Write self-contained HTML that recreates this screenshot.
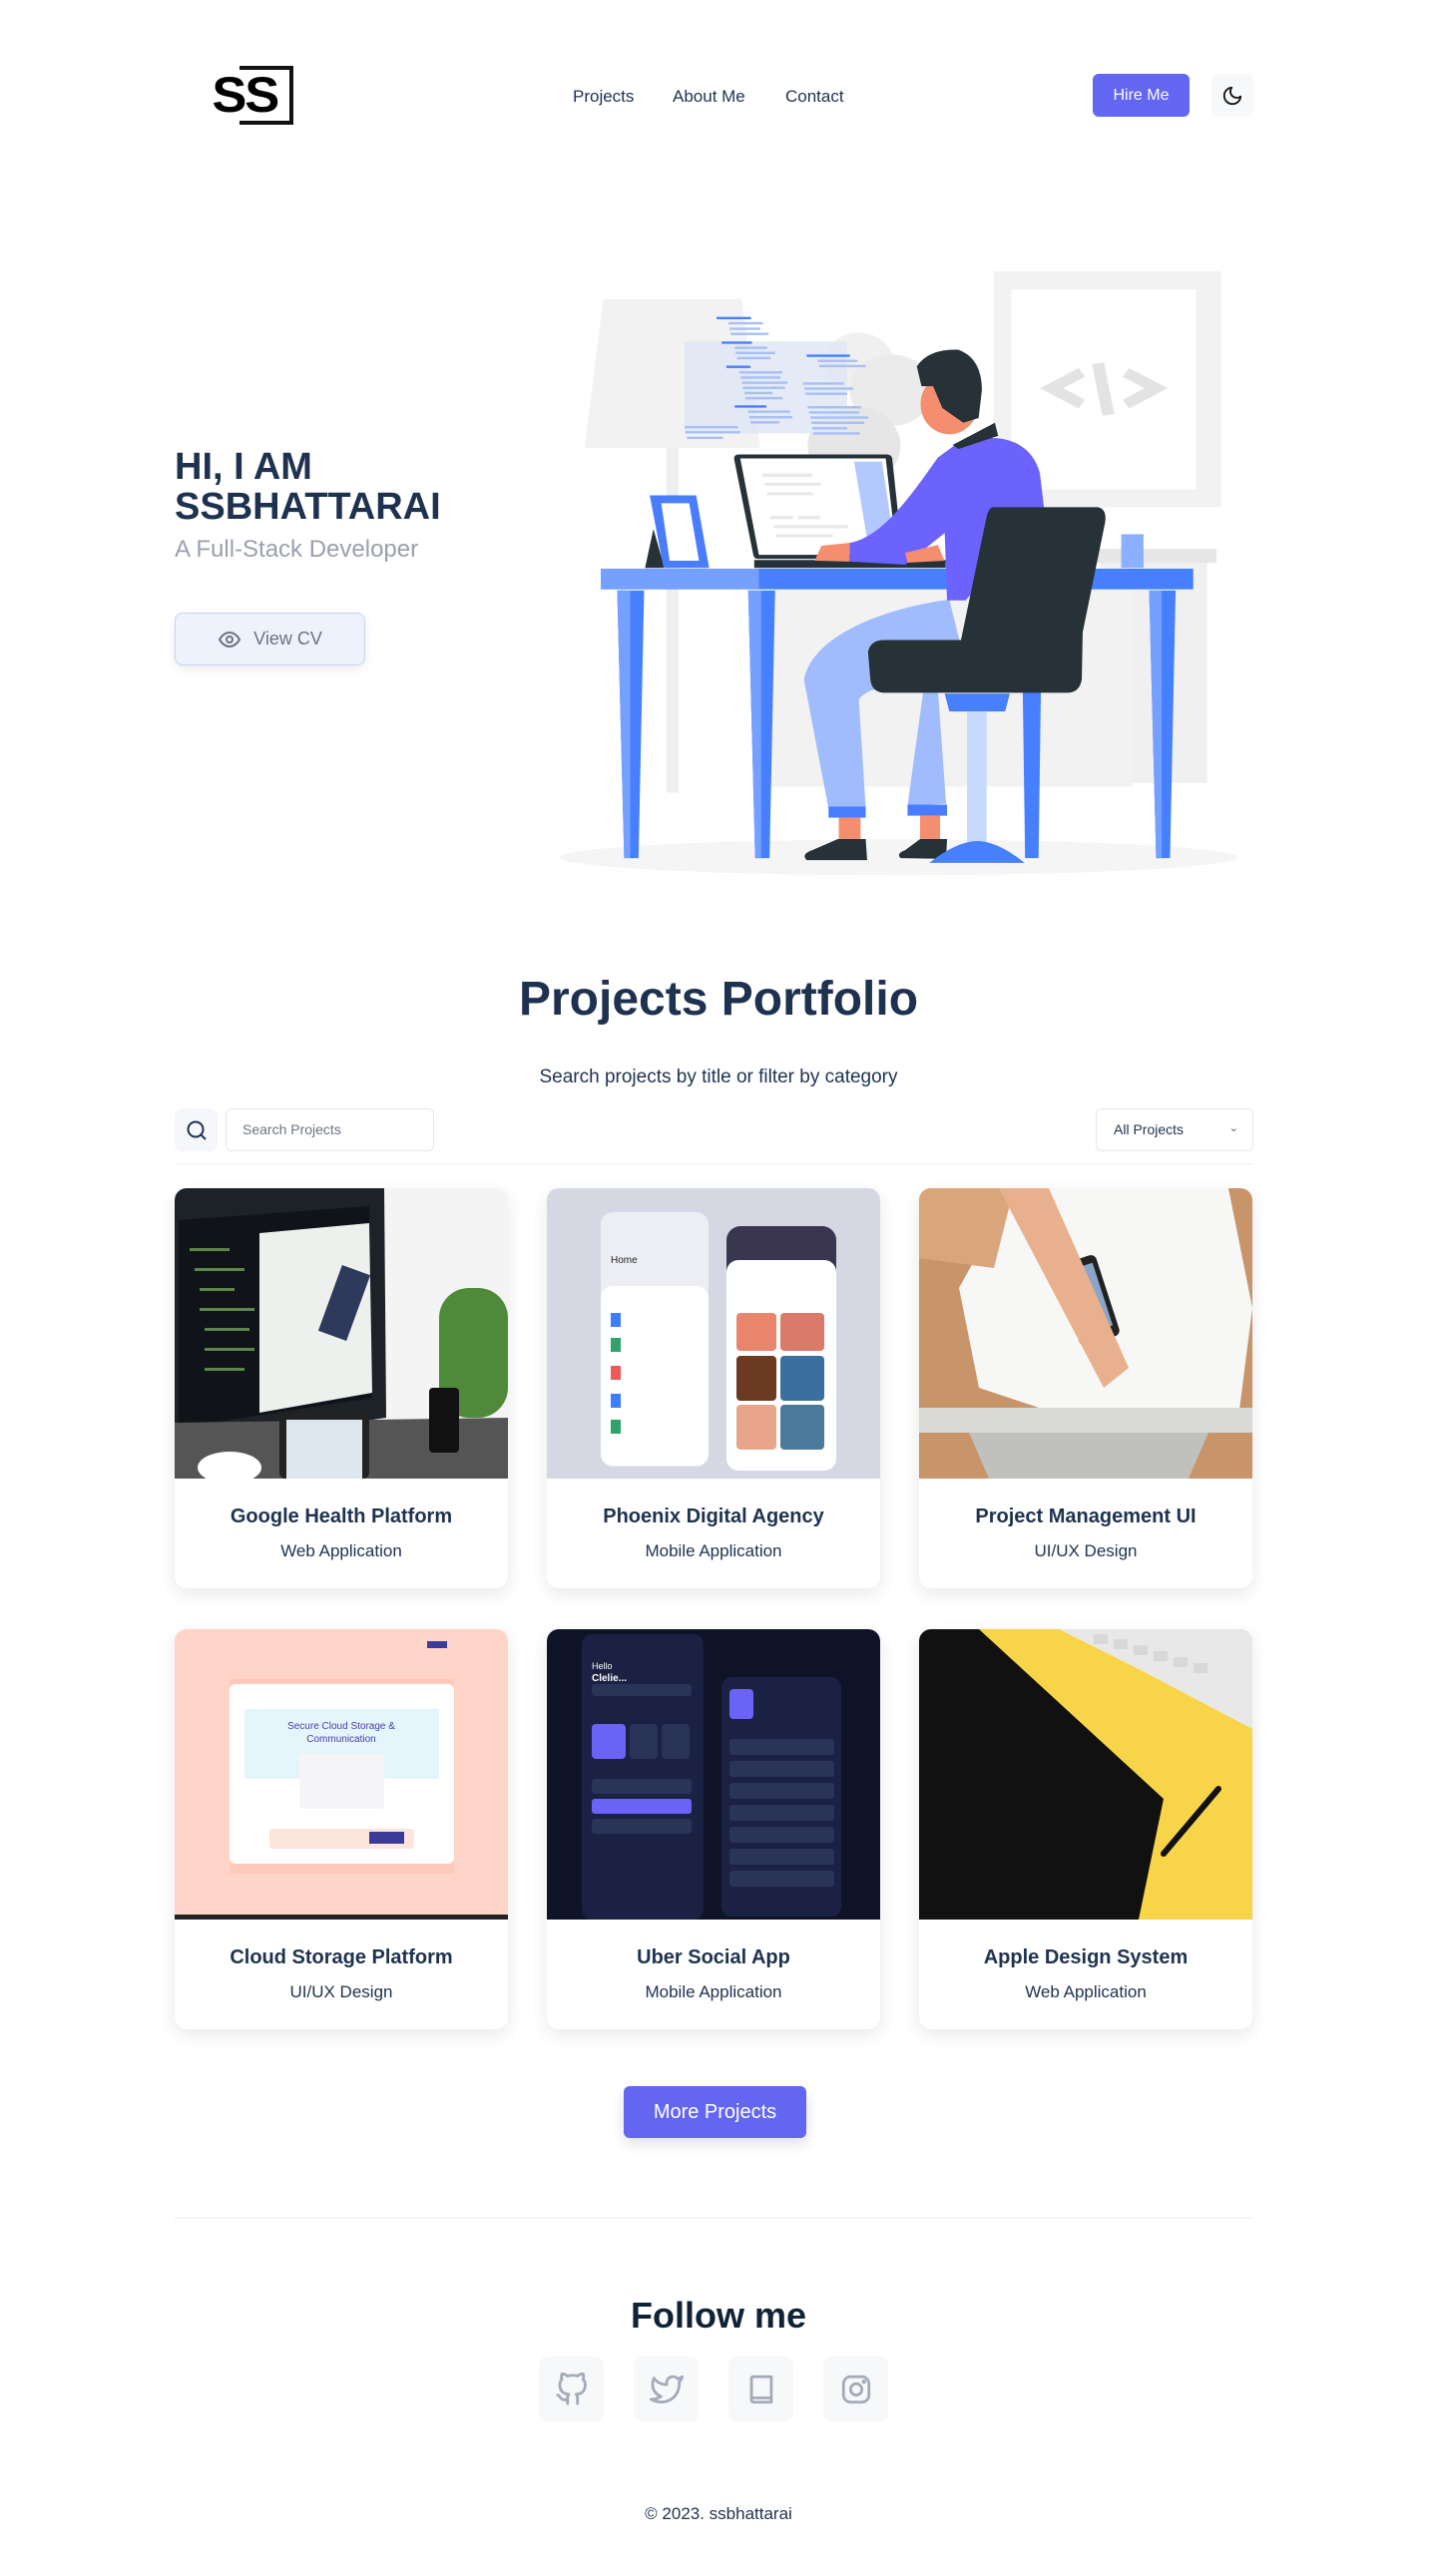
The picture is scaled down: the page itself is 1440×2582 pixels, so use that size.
<!DOCTYPE html>
<html><head><meta charset="utf-8">
<style>
*{margin:0;padding:0;box-sizing:border-box}
body{width:1440px;height:2582px;background:#fff;font-family:"Liberation Sans",sans-serif;color:#1e3250;position:relative;overflow:hidden}
.a{position:absolute}
.nav{font-size:17px;color:#1e3250}
.card{position:absolute;width:334px;height:401px;border-radius:12px;background:#fff;box-shadow:0 6px 18px rgba(0,0,0,.09);overflow:hidden}
.card svg{display:block}
.card h3{font-size:20px;font-weight:bold;text-align:center;margin-top:27px;color:#1e3250}
.card p{font-size:17px;text-align:center;margin-top:13px;color:#1e3250}
.soc{position:absolute;top:2362px;width:65px;height:65px;border-radius:8px;background:#f7f8fa;display:flex;align-items:center;justify-content:center}
</style></head><body>

<div class="a" style="left:240px;top:66px;width:54px;height:59px;border:4px solid #111;border-left:none"></div>
<div class="a" style="left:214px;top:70px;font-size:50px;font-weight:bold;color:#000;letter-spacing:-2px;line-height:50px;background:#fff;padding-right:2px;transform:scaleX(1.05)">SS</div>
<div class="a nav" style="left:574px;top:87px">Projects</div>
<div class="a nav" style="left:674px;top:87px">About Me</div>
<div class="a nav" style="left:787px;top:87px">Contact</div>
<div class="a" style="left:1095px;top:74px;width:97px;height:43px;border-radius:6px;background:#6366f1;color:#fff;font-size:16px;text-align:center;line-height:43px">Hire Me</div>
<div class="a" style="left:1214px;top:74px;width:42px;height:43px;border-radius:6px;background:#f7f8fa;display:flex;align-items:center;justify-content:center">
<svg width="22" height="22" viewBox="0 0 24 24" fill="none" stroke="#111" stroke-width="2" stroke-linecap="round" stroke-linejoin="round"><path d="M21 12.8A9 9 0 1 1 11.2 3a7 7 0 0 0 9.8 9.8z"/></svg></div>

<div class="a" style="left:175px;top:448px;font-size:38px;font-weight:bold;line-height:40px;color:#1e3250">HI, I AM<br>SSBHATTARAI</div>
<div class="a" style="left:175px;top:537px;font-size:24px;color:#9aa0ad">A Full-Stack Developer</div>
<div class="a" style="left:175px;top:614px;width:191px;height:53px;border-radius:8px;background:#eef2fd;border:1px solid #c7d3f8;box-shadow:0 4px 10px rgba(0,0,0,.08);display:flex;align-items:center;justify-content:center;font-size:18px;color:#6b7280">
<svg width="24" height="24" viewBox="0 0 24 24" fill="none" stroke="#6b7280" stroke-width="2"><path d="M2 12s3.6-7 10-7 10 7 10 7-3.6 7-10 7S2 12 2 12z"/><circle cx="12" cy="12" r="3"/></svg><span style="margin-left:12px">View CV</span></div>

<svg class="a" style="left:530px;top:260px" width="730" height="620" viewBox="0 0 1568 1560" preserveAspectRatio="none">
<ellipse cx="795" cy="1508" rx="730" ry="45" fill="#f5f5f5"/>
<polygon points="160,100 458,100 498,475 120,475" fill="#f2f2f2"/>
<rect x="296" y="475" width="26" height="870" fill="#efefef"/>
<rect x="1000" y="30" width="490" height="595" fill="#f2f2f2"/>
<rect x="1038" y="76" width="398" height="504" fill="#fff"/>
<g stroke="#e3e3e3" stroke-width="26" fill="none"><polyline points="1190,285 1125,325 1190,365"/><line x1="1225" y1="262" x2="1247" y2="392"/><polyline points="1285,285 1350,325 1285,365"/></g>
<rect x="1220" y="730" width="260" height="35" fill="#e6e6e6"/>
<rect x="1230" y="765" width="230" height="555" fill="#f0f0f0"/>
<rect x="520" y="830" width="780" height="500" fill="#f2f2f2"/>
<circle cx="710" cy="260" r="75" fill="#f0f0f0"/><circle cx="780" cy="330" r="90" fill="#ebebeb"/><circle cx="700" cy="470" r="100" fill="#e6e6e6"/>
<rect x="335" y="207" width="350" height="232" fill="#dfe6f5" opacity=".85"/>
<g fill="#4680ff"><rect x="404" y="145" width="74" height="6"/><rect x="415" y="207" width="65" height="6"/><rect x="425" y="268" width="52" height="6"/><rect x="443" y="368" width="68" height="6"/><rect x="598" y="240" width="93" height="6"/><rect x="475" y="518" width="62" height="7"/><rect x="493" y="625" width="40" height="7"/></g>
<g fill="#a8c0f5"><rect x="430" y="158" width="74" height="6"/><rect x="432" y="172" width="66" height="6"/><rect x="434" y="185" width="82" height="6"/><rect x="443" y="220" width="70" height="6"/><rect x="445" y="233" width="85" height="6"/><rect x="448" y="246" width="72" height="6"/><rect x="453" y="282" width="92" height="6"/><rect x="456" y="295" width="86" height="6"/><rect x="459" y="308" width="98" height="6"/><rect x="461" y="321" width="90" height="6"/><rect x="464" y="334" width="60" height="6"/><rect x="466" y="347" width="80" height="6"/><rect x="472" y="381" width="90" height="6"/><rect x="475" y="395" width="92" height="6"/><rect x="477" y="408" width="62" height="6"/><rect x="335" y="420" width="115" height="6"/><rect x="337" y="433" width="118" height="6"/><rect x="340" y="447" width="78" height="6"/><rect x="622" y="253" width="85" height="6"/><rect x="625" y="266" width="100" height="6"/><rect x="590" y="310" width="88" height="6"/><rect x="593" y="323" width="105" height="6"/><rect x="595" y="336" width="90" height="6"/><rect x="600" y="370" width="115" height="6"/><rect x="603" y="383" width="108" height="6"/><rect x="606" y="396" width="124" height="6"/><rect x="608" y="409" width="114" height="6"/><rect x="610" y="423" width="75" height="6"/><rect x="612" y="436" width="100" height="6"/></g>
<path d="M452,492 L770,492 Q780,492 782,502 L805,755 L492,755 Q485,755 483,745 L442,505 Q440,492 452,492Z" fill="#263238"/>
<polygon points="455,502 768,502 792,745 495,745" fill="#fff"/>
<polygon points="700,510 760,510 785,705 728,705" fill="#b3c8fc"/>
<g fill="#e8e8e8"><rect x="503" y="540" width="106" height="8"/><rect x="508" y="563" width="120" height="8"/><rect x="513" y="587" width="98" height="8"/><rect x="520" y="647" width="48" height="8"/><rect x="580" y="647" width="46" height="8"/><rect x="527" y="670" width="160" height="8"/><rect x="532" y="693" width="122" height="8"/></g>
<rect x="485" y="758" width="412" height="20" fill="#263238"/>
<polygon points="250,778 268,680 292,778" fill="#263238"/>
<polygon points="260,595 360,595 388,778 290,778" fill="#4a7dfd"/>
<polygon points="285,615 345,615 366,760 303,760" fill="#fff"/>
<rect x="1275" y="693" width="48" height="85" fill="#8ab0ff"/>
<rect x="155" y="780" width="1275" height="52" fill="#4680ff"/>
<rect x="155" y="780" width="340" height="52" fill="#75a0ff"/>
<g fill="#4680ff"><polygon points="190,835 248,835 236,1510 205,1510"/><polygon points="472,835 530,835 518,1510 487,1510"/><polygon points="1060,835 1105,835 1097,1510 1068,1510"/><polygon points="1335,835 1392,835 1380,1510 1350,1510"/></g>
<g fill="#75a0ff"><polygon points="190,835 218,835 218,1510 205,1510"/><polygon points="472,835 500,835 500,1510 487,1510"/><polygon points="1335,835 1362,835 1362,1510 1350,1510"/></g>
<path d="M905,858 C760,880 610,950 592,1060 L645,1385 L725,1382 L710,1110 C730,1075 800,1070 850,1080 L815,1378 L898,1373 L880,1080 L935,1000 Z" fill="#a0bcfc"/>
<rect x="645" y="1380" width="80" height="28" fill="#4a7dfd"/><rect x="815" y="1375" width="85" height="28" fill="#4a7dfd"/>
<rect x="667" y="1408" width="47" height="58" fill="#f58e6f"/><rect x="842" y="1403" width="43" height="60" fill="#f58e6f"/>
<path d="M665,1462 L725,1462 L728,1515 L598,1515 Q585,1500 610,1490Z" fill="#263238"/>
<path d="M842,1462 L900,1462 L898,1512 L800,1510 Q790,1498 810,1490Z" fill="#263238"/>
<path d="M915,470 C1000,430 1080,450 1100,540 L1110,640 L940,860 L900,860 L895,690 L810,770 L690,762 L690,715 C760,700 820,600 880,500 Z" fill="#6c63ff"/>
<path d="M615,760 L630,722 L690,715 L690,762Z" fill="#f58e6f"/>
<path d="M810,740 L880,720 L895,760 L815,765Z" fill="#f58e6f"/>
<path d="M912,468 L1003,412 L1010,445 L925,478Z" fill="#263238"/>
<ellipse cx="905" cy="365" rx="62" ry="76" fill="#f58e6f"/>
<path d="M835,270 Q860,225 925,228 Q975,250 975,330 L968,400 L935,412 L890,375 L870,320 L845,320 Z" fill="#263238"/>
<path d="M1000,625 L1225,625 Q1245,630 1240,665 L1192,940 L1190,1060 Q1185,1092 1160,1093 L762,1093 Q738,1090 735,1060 L730,990 Q735,960 765,960 L930,960 L985,650 Q990,625 1000,625Z" fill="#263238"/>
<polygon points="895,1095 1035,1095 1025,1140 905,1140" fill="#4680ff"/>
<rect x="943" y="1140" width="42" height="330" fill="#c7d8ff"/>
<path d="M862,1522 Q920,1468 965,1467 Q1010,1468 1067,1522Z" fill="#4680ff"/>
</svg>

<div class="a" style="left:0;width:1440px;top:974px;text-align:center;font-size:48px;font-weight:bold;color:#1e3250">Projects Portfolio</div>
<div class="a" style="left:0;width:1440px;top:1069px;text-align:center;font-size:19px;color:#1e3250">Search projects by title or filter by category</div>
<div class="a" style="left:175px;top:1111px;width:43px;height:43px;border-radius:8px;background:#f5f7fb;display:flex;align-items:center;justify-content:center"><svg width="24" height="24" viewBox="0 0 24 24" fill="none" stroke="#1e3250" stroke-width="2"><circle cx="11" cy="11" r="7.5"/><path d="M16.5 16.5L21 21"/></svg></div>
<div class="a" style="left:226px;top:1111px;width:209px;height:43px;border-radius:6px;border:1px solid #e4e6eb;font-size:14px;color:#6b7280;line-height:41px;padding-left:16px">Search Projects</div>
<div class="a" style="left:1098px;top:1111px;width:158px;height:43px;border-radius:6px;border:1px solid #e4e6eb;font-size:14px;color:#1e3250;line-height:41px;padding-left:17px">All Projects<span style="position:absolute;right:14px;top:-1px;font-size:11px;color:#555">&#8964;</span></div>
<div class="a" style="left:175px;top:1166px;width:1081px;height:1px;background:#f0f1f4"></div>

<div class="card" style="left:175px;top:1191px">
<svg width="334" height="291" viewBox="0 0 334 291"><rect width="334" height="291" fill="#f4f4f4"/><rect x="265" y="100" width="69" height="130" fill="#4e8a3a" rx="30"/><polygon points="0,0 210,0 212,230 0,260" fill="#1d2228"/><polygon points="4,32 195,18 198,210 4,240" fill="#101418"/><g fill="#6fa35a" opacity=".8"><rect x="15" y="60" width="40" height="3"/><rect x="20" y="80" width="50" height="3"/><rect x="25" y="100" width="35" height="3"/><rect x="25" y="120" width="55" height="3"/><rect x="30" y="140" width="45" height="3"/><rect x="30" y="160" width="50" height="3"/><rect x="30" y="180" width="40" height="3"/></g><polygon points="85,45 195,35 198,205 85,225" fill="#eef0ee"/><rect x="155" y="80" width="30" height="70" fill="#2e3a5c" transform="rotate(20 170 115)"/><polygon points="0,235 334,230 334,291 0,291" fill="#555"/><rect x="105" y="225" width="90" height="66" rx="6" fill="#222"/><rect x="112" y="232" width="76" height="59" fill="#dde6ee"/><rect x="255" y="200" width="30" height="65" rx="4" fill="#111"/><ellipse cx="55" cy="280" rx="32" ry="16" fill="#fff"/></svg>
<h3>Google Health Platform</h3><p>Web Application</p></div>

<div class="card" style="left:548px;top:1191px">
<svg width="334" height="291" viewBox="0 0 334 291"><rect width="334" height="291" fill="#d5d7e2"/><rect x="54" y="24" width="108" height="255" rx="12" fill="#eceef4"/><rect x="54" y="98" width="108" height="180" rx="12" fill="#fff"/><text x="64" y="75" font-size="10" font-family="Liberation Sans" fill="#222">Home</text><g fill="#3d7eff"><rect x="64" y="125" width="10" height="14"/><rect x="64" y="206" width="10" height="14"/></g><g fill="#2fa36b"><rect x="64" y="150" width="10" height="14"/><rect x="64" y="232" width="10" height="14"/></g><rect x="64" y="178" width="10" height="14" fill="#ee5a5a"/><rect x="180" y="38" width="110" height="245" rx="14" fill="#3a3650"/><rect x="180" y="72" width="110" height="211" rx="12" fill="#fff"/><rect x="190" y="125" width="40" height="38" rx="4" fill="#e9856c"/><rect x="234" y="125" width="44" height="38" rx="4" fill="#d97a6a"/><rect x="190" y="168" width="40" height="45" rx="4" fill="#6b3a20"/><rect x="234" y="168" width="44" height="45" rx="4" fill="#3a6fa0"/><rect x="190" y="217" width="40" height="45" rx="4" fill="#e8a58c"/><rect x="234" y="217" width="44" height="45" rx="4" fill="#4b7a9a"/></svg>
<h3>Phoenix Digital Agency</h3><p>Mobile Application</p></div>

<div class="card" style="left:921px;top:1191px">
<svg width="334" height="291" viewBox="0 0 334 291"><rect width="334" height="291" fill="#c8946a"/><polygon points="95,0 310,0 334,120 320,230 180,240 60,200 40,100" fill="#f7f7f5"/><polygon points="0,0 95,0 75,80 0,70" fill="#d9a57a"/><rect x="148" y="70" width="42" height="85" rx="6" fill="#222" transform="rotate(-18 169 112)"/><rect x="153" y="78" width="32" height="66" fill="#8aa5c9" transform="rotate(-18 169 112)"/><polygon points="80,0 130,0 210,180 185,200" fill="#e8b08c"/><rect x="0" y="220" width="334" height="25" fill="#d9d9d6"/><polygon points="50,245 290,245 270,291 70,291" fill="#c0c0bc"/></svg>
<h3>Project Management UI</h3><p>UI/UX Design</p></div>

<div class="card" style="left:175px;top:1633px">
<svg width="334" height="291" viewBox="0 0 334 291"><rect width="334" height="291" fill="#ffd4c9"/><rect x="55" y="50" width="225" height="195" fill="#ffc2b2" opacity=".6"/><rect x="55" y="55" width="225" height="180" rx="6" fill="#fff"/><rect x="70" y="80" width="195" height="70" fill="#e4f6fb"/><text x="167" y="100" font-size="10" text-anchor="middle" font-family="Liberation Sans" fill="#4a3aa8">Secure Cloud Storage &amp;</text><text x="167" y="113" font-size="10" text-anchor="middle" font-family="Liberation Sans" fill="#4a3aa8">Communication</text><rect x="125" y="125" width="85" height="55" rx="3" fill="#f5f5f8"/><rect x="95" y="200" width="145" height="20" rx="3" fill="#fde5de"/><rect x="195" y="203" width="35" height="12" fill="#3b3b9a"/><rect x="253" y="12" width="20" height="7" fill="#3b3b9a"/><rect x="0" y="286" width="334" height="5" fill="#222"/></svg>
<h3>Cloud Storage Platform</h3><p>UI/UX Design</p></div>

<div class="card" style="left:548px;top:1633px">
<svg width="334" height="291" viewBox="0 0 334 291"><rect width="334" height="291" fill="#0e1328"/><rect x="35" y="5" width="122" height="286" rx="10" fill="#1a2142"/><rect x="175" y="48" width="120" height="240" rx="10" fill="#1a2142"/><rect x="45" y="55" width="100" height="12" rx="3" fill="#2a3358"/><rect x="45" y="95" width="34" height="35" rx="4" fill="#6a63f5"/><rect x="83" y="95" width="28" height="35" rx="4" fill="#2a3358"/><rect x="115" y="95" width="28" height="35" rx="4" fill="#2a3358"/><g fill="#2a3358"><rect x="45" y="150" width="100" height="15" rx="3"/><rect x="45" y="190" width="100" height="15" rx="3"/></g><rect x="45" y="170" width="100" height="15" rx="3" fill="#6a63f5"/><rect x="183" y="60" width="24" height="30" rx="4" fill="#6a63f5"/><g fill="#2a3358"><rect x="183" y="110" width="105" height="16" rx="3"/><rect x="183" y="132" width="105" height="16" rx="3"/><rect x="183" y="154" width="105" height="16" rx="3"/><rect x="183" y="176" width="105" height="16" rx="3"/><rect x="183" y="198" width="105" height="16" rx="3"/><rect x="183" y="220" width="105" height="16" rx="3"/><rect x="183" y="242" width="105" height="16" rx="3"/></g><text x="45" y="40" font-size="9" font-family="Liberation Sans" fill="#fff">Hello</text><text x="45" y="52" font-size="10" font-weight="bold" font-family="Liberation Sans" fill="#fff">Clelie...</text></svg>
<h3>Uber Social App</h3><p>Mobile Application</p></div>

<div class="card" style="left:921px;top:1633px">
<svg width="334" height="291" viewBox="0 0 334 291"><rect width="334" height="291" fill="#f8d548"/><polygon points="0,0 60,0 245,170 220,291 0,291" fill="#111"/><polygon points="140,0 334,0 334,100 220,40" fill="#e8e8e8"/><g fill="#d8d8d8"><rect x="175" y="5" width="14" height="10"/><rect x="195" y="10" width="14" height="10"/><rect x="215" y="16" width="14" height="10"/><rect x="235" y="22" width="14" height="10"/><rect x="255" y="28" width="14" height="10"/><rect x="275" y="34" width="14" height="10"/></g><line x1="300" y1="160" x2="245" y2="225" stroke="#111" stroke-width="6" stroke-linecap="round"/></svg>
<h3>Apple Design System</h3><p>Web Application</p></div>

<div class="a" style="left:625px;top:2091px;width:183px;height:52px;border-radius:6px;background:#6366f1;color:#fff;font-size:20px;text-align:center;line-height:52px;box-shadow:0 6px 14px rgba(0,0,0,.12)">More Projects</div>
<div class="a" style="left:175px;top:2222px;width:1081px;height:2px;background:#f4f5f8"></div>
<div class="a" style="left:0;width:1440px;top:2300px;text-align:center;font-size:36px;font-weight:bold;color:#0f2236">Follow me</div>

<div class="soc" style="left:540px"><svg width="34" height="34" viewBox="0 0 24 24" fill="none" stroke="#a4abb8" stroke-width="2" stroke-linecap="round" stroke-linejoin="round"><path d="M9 19c-5 1.5-5-2.5-7-3m14 6v-3.9a3.4 3.4 0 0 0-.9-2.6c3.1-.3 6.4-1.5 6.4-7A5.4 5.4 0 0 0 20 4.8 5 5 0 0 0 19.9 1S18.7.7 16 2.5a13.4 13.4 0 0 0-7 0C6.3.7 5.1 1 5.1 1A5 5 0 0 0 5 4.8a5.4 5.4 0 0 0-1.5 3.7c0 5.4 3.3 6.6 6.4 7A3.4 3.4 0 0 0 9 18.1V22"/></svg></div>
<div class="soc" style="left:635px"><svg width="34" height="34" viewBox="0 0 24 24" fill="none" stroke="#a4abb8" stroke-width="2" stroke-linecap="round" stroke-linejoin="round"><path d="M23 3a10.9 10.9 0 0 1-3.1 1.5 4.5 4.5 0 0 0-7.9 3v1A10.7 10.7 0 0 1 3 4s-4 9 5 13a11.6 11.6 0 0 1-7 2c9 5 20 0 20-11.5a4.5 4.5 0 0 0-.1-.8A7.7 7.7 0 0 0 23 3z"/></svg></div>
<div class="soc" style="left:730px"><svg width="34" height="34" viewBox="0 0 24 24" fill="none" stroke="#a4abb8" stroke-width="2" stroke-linecap="round" stroke-linejoin="round"><path d="M5 20V4a1 1 0 0 1 1-1h13v15H6.5A1.5 1.5 0 0 0 5 19.5 1.5 1.5 0 0 0 6.5 21H19v-3"/></svg></div>
<div class="soc" style="left:825px"><svg width="34" height="34" viewBox="0 0 24 24" fill="none" stroke="#a4abb8" stroke-width="2" stroke-linecap="round" stroke-linejoin="round"><rect x="3" y="3" width="18" height="18" rx="5"/><circle cx="12" cy="12" r="4"/><circle cx="17.5" cy="6.5" r=".6" fill="#a4abb8"/></svg></div>

<div class="a" style="left:0;width:1440px;top:2510px;text-align:center;font-size:17px;color:#1e3250">© 2023. ssbhattarai</div>
</body></html>
